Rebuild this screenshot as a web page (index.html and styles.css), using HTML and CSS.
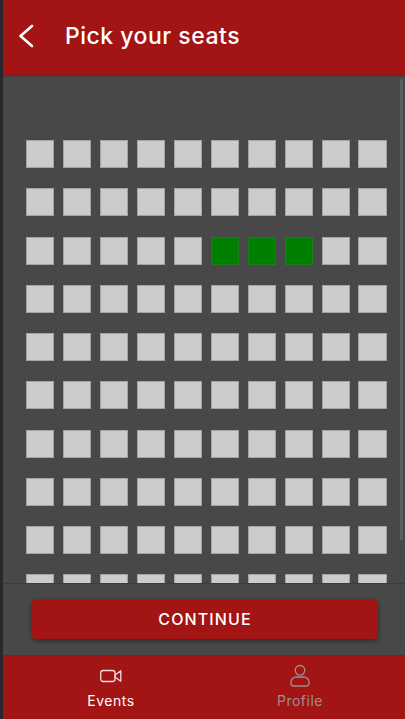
FILE: index.html
```html
<!DOCTYPE html>
<html lang="en">
<head>
<meta charset="utf-8">
<title>Pick your seats</title>
<link rel="stylesheet" href="styles.css">
</head>
<body>
<div class="app">
  <header class="topbar">
    <svg class="back" width="24" height="28" viewBox="0 0 24 28"><path d="M18 3 L6.500 13 L18 23" fill="none" stroke="#fff" stroke-width="2.600" stroke-linecap="round" stroke-linejoin="round"/></svg>
    <h1 class="title">Pick your seats</h1>
  </header>
  <main class="stage">
    <div class="seats">
      <i class="seat"></i><i class="seat"></i><i class="seat"></i><i class="seat"></i><i class="seat"></i><i class="seat"></i><i class="seat"></i><i class="seat"></i><i class="seat"></i><i class="seat"></i>
      <i class="seat"></i><i class="seat"></i><i class="seat"></i><i class="seat"></i><i class="seat"></i><i class="seat"></i><i class="seat"></i><i class="seat"></i><i class="seat"></i><i class="seat"></i>
      <i class="seat"></i><i class="seat"></i><i class="seat"></i><i class="seat"></i><i class="seat"></i><i class="seat picked"></i><i class="seat picked"></i><i class="seat picked"></i><i class="seat"></i><i class="seat"></i>
      <i class="seat"></i><i class="seat"></i><i class="seat"></i><i class="seat"></i><i class="seat"></i><i class="seat"></i><i class="seat"></i><i class="seat"></i><i class="seat"></i><i class="seat"></i>
      <i class="seat"></i><i class="seat"></i><i class="seat"></i><i class="seat"></i><i class="seat"></i><i class="seat"></i><i class="seat"></i><i class="seat"></i><i class="seat"></i><i class="seat"></i>
      <i class="seat"></i><i class="seat"></i><i class="seat"></i><i class="seat"></i><i class="seat"></i><i class="seat"></i><i class="seat"></i><i class="seat"></i><i class="seat"></i><i class="seat"></i>
      <i class="seat"></i><i class="seat"></i><i class="seat"></i><i class="seat"></i><i class="seat"></i><i class="seat"></i><i class="seat"></i><i class="seat"></i><i class="seat"></i><i class="seat"></i>
      <i class="seat"></i><i class="seat"></i><i class="seat"></i><i class="seat"></i><i class="seat"></i><i class="seat"></i><i class="seat"></i><i class="seat"></i><i class="seat"></i><i class="seat"></i>
      <i class="seat"></i><i class="seat"></i><i class="seat"></i><i class="seat"></i><i class="seat"></i><i class="seat"></i><i class="seat"></i><i class="seat"></i><i class="seat"></i><i class="seat"></i>
      <i class="seat"></i><i class="seat"></i><i class="seat"></i><i class="seat"></i><i class="seat"></i><i class="seat"></i><i class="seat"></i><i class="seat"></i><i class="seat"></i><i class="seat"></i>
    </div>
    <div class="scrollbar"></div>
  </main>
  <div class="action">
    <button class="continue" type="button">CONTINUE</button>
  </div>
  <nav class="tabs">
    <div class="tab active">
      <svg width="24" height="24" viewBox="0 0 24 24" fill="none" stroke="currentColor" stroke-width="1.300"><rect x="1.700" y="6.500" width="14.300" height="11" rx="2.500"/><path d="M16 11 L21.800 6.800 V17.200 L16 13 Z" stroke-linejoin="round"/></svg>
      <span>Events</span>
    </div>
    <div class="tab">
      <svg width="24" height="24" viewBox="0 0 24 24" fill="none" stroke="currentColor" stroke-width="1.300"><circle cx="12" cy="6.300" r="4.800"/><path d="M5.500 22 H18.500 A2.500 2.500 0 0 0 21 19.500 V18 A5 5 0 0 0 16 13 H8 A5 5 0 0 0 3 18 V19.500 A2.500 2.500 0 0 0 5.500 22 Z"/></svg>
      <span>Profile</span>
    </div>
  </nav>
</div>
</body>
</html>
```
FILE: styles.css
```css
* { box-sizing: border-box; }
html, body { margin: 0; height: 100%; }
body { background: #28282c; font-family: Inter, "Liberation Sans", sans-serif; overflow: hidden; }
.app { margin-left: 3px; height: 719px; display: flex; flex-direction: column; background: #484848; }
.topbar { height: 75px; flex: none; background: #a31414; display: flex; align-items: center; padding-left: 11px; box-shadow: 0 1px 2px rgba(0,0,0,.25); position: relative; z-index: 1; }
.back { flex: none; position: relative; top: -1px; }
.title { margin: 0 0 0 27px; color: #fff; font-size: 23px; font-weight: 500; letter-spacing: .5px; line-height: 1; position: relative; top: -1px; }
.stage { height: 508px; flex: none; overflow: hidden; position: relative; padding: 65px 0 0 23px; }
.seats { display: grid; grid-template-columns: repeat(10, 28.4px); grid-auto-rows: 28px; column-gap: 8.55px; row-gap: 20.25px; }
.seat { display: block; background: #ccc; border: 1px solid #a3a3a3; }
.picked { background: #008000; border-color: #1f7a1f; }
.scrollbar { position: absolute; top: 4px; right: 2px; width: 3px; height: 461px; background: #5e5e5e; }
.action { height: 72px; flex: none; border-top: 1px solid #3c3c3c; padding: 15px 27px 0 29px; }
.continue { display: block; width: 100%; height: 40px; border: 0; border-radius: 4px; background: #a31414; color: #fff; font: 500 16px Inter, "Liberation Sans", sans-serif; letter-spacing: 1.1px; box-shadow: 0 2px 4px rgba(0,0,0,.4); }
.tabs { height: 64px; flex: none; background: #a31414; display: grid; grid-template-columns: 1fr 1fr; border-top: 1px solid #7e2020; padding: 0 10.5px 0 13.5px; }
.tab { display: flex; flex-direction: column; align-items: center; padding-top: 8px; color: #9b9091; font-size: 14px; line-height: 16px; }
.tab svg { margin-bottom: 5px; }
.tab span { letter-spacing: .5px; }
.active { color: #fff; }
.active svg { color: #f3dcdc; }
```
